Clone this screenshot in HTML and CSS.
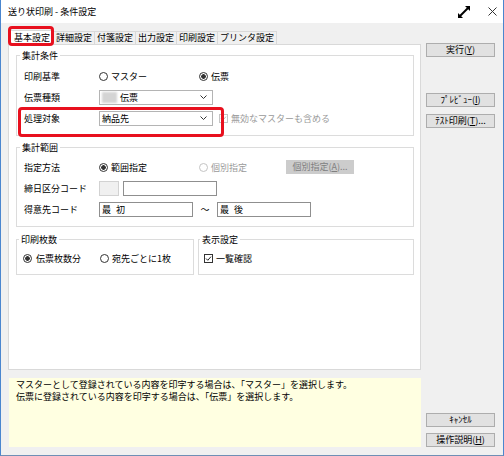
FILE: index.html
```html
<!DOCTYPE html>
<html lang="ja">
<head>
<meta charset="UTF-8">
<title>送り状印刷 - 条件設定</title>
<link rel="stylesheet" href="styles.css">
</head>
<body>

<div class="window">
    <div class="titlebar">
        <span class="title">送り状印刷 - 条件設定</span>
        <span class="title-tools">
            <svg width="16" height="16" viewBox="0 0 16 16">
                <path d="M4 12 L12 4" stroke="#000" stroke-width="2"/>
                <path d="M9 2 H14 V7 Z" fill="#000"/>
                <path d="M2 9 V14 H7 Z" fill="#000"/>
            </svg>
            <svg width="9" height="9" viewBox="0 0 9 9">
                <path d="M0.5 0.5 L8.5 8.5 M8.5 0.5 L0.5 8.5" stroke="#333" stroke-width="1"/>
            </svg>
        </span>
    </div>

    <div class="main">
        <div class="left">
            <div class="tabs">
                <span class="tab active">基本設定</span>
                <span class="tab">詳細設定</span>
                <span class="tab">付箋設定</span>
                <span class="tab">出力設定</span>
                <span class="tab">印刷設定</span>
                <span class="tab">プリンタ設定</span>
            </div>

            <div class="panel">
                <fieldset class="group">
                    <legend>集計条件</legend>
                    <div class="row">
                        <span class="label">印刷基準</span>
                        <span class="opt"><i class="radio"></i>マスター</span>
                        <span class="opt"><i class="radio on"></i>伝票</span>
                    </div>
                    <div class="row">
                        <span class="label">伝票種類</span>
                        <span class="select">
                            <span class="masked"></span>伝票
                            <svg class="chev" width="7" height="4" viewBox="0 0 7 4"><path d="M0.5 0.5 L3.5 3.5 L6.5 0.5" fill="none" stroke="#333"/></svg>
                        </span>
                    </div>
                    <div class="row marked">
                        <span class="label">処理対象</span>
                        <span class="select">
                            納品先
                            <svg class="chev" width="7" height="4" viewBox="0 0 7 4"><path d="M0.5 0.5 L3.5 3.5 L6.5 0.5" fill="none" stroke="#333"/></svg>
                        </span>
                        <span class="opt disabled include">
                            <svg class="check" width="9" height="9" viewBox="0 0 9 9">
                                <rect x="0.5" y="0.5" width="8" height="8" fill="#fff" stroke="#c4c4c4"/>
                                <path d="M2 4.5 L3.8 6.3 L7 2.6" fill="none" stroke="#bdbdbd"/>
                            </svg>無効なマスターも含める
                        </span>
                    </div>
                </fieldset>

                <fieldset class="group range">
                    <legend>集計範囲</legend>
                    <div class="row">
                        <span class="label">指定方法</span>
                        <span class="opt"><i class="radio on"></i>範囲指定</span>
                        <span class="opt disabled narrow"><i class="radio off"></i>個別指定</span>
                        <span class="btn-inline">個別指定(<u>A</u>)...</span>
                    </div>
                    <div class="row">
                        <span class="label">締日区分コード</span>
                        <span class="codebox"></span>
                        <span class="input"></span>
                    </div>
                    <div class="row">
                        <span class="label">得意先コード</span>
                        <span class="input">最 初</span>
                        <span class="tilde">～</span>
                        <span class="input">最 後</span>
                    </div>
                </fieldset>

                <div class="group-pair">
                    <fieldset class="group copies">
                        <legend>印刷枚数</legend>
                        <div class="row">
                            <span class="opt short"><i class="radio on"></i>伝票枚数分</span>
                            <span class="opt"><i class="radio"></i>宛先ごとに1枚</span>
                        </div>
                    </fieldset>
                    <fieldset class="group display">
                        <legend>表示設定</legend>
                        <div class="row">
                            <span class="opt">
                                <svg class="check" width="9" height="9" viewBox="0 0 9 9">
                                    <rect x="0.5" y="0.5" width="8" height="8" fill="#fff" stroke="#333"/>
                                    <path d="M2 4.5 L3.8 6.3 L7 2.6" fill="none" stroke="#222"/>
                                </svg>一覧確認
                            </span>
                        </div>
                    </fieldset>
                </div>
            </div>

            <div class="message">
                マスターとして登録されている内容を印字する場合は、「マスター」を選択します。<br>
                伝票に登録されている内容を印字する場合は、「伝票」を選択します。
            </div>
        </div>

        <div class="side">
            <span class="btn">実行(<u>Y</u>)</span>
            <span class="btn btn-preview">ﾌﾟﾚﾋﾞｭｰ(<u>I</u>)</span>
            <span class="btn btn-test">ﾃｽﾄ印刷(<u>T</u>)...</span>
            <span class="btn btn-cancel">ｷｬﾝｾﾙ</span>
            <span class="btn btn-help">操作説明(<u>H</u>)</span>
        </div>
    </div>
</div>

</body>
</html>
```

FILE: styles.css
```css
* {
    box-sizing: border-box;
}
body {
    margin: 0;
    font-family: "Noto Sans CJK JP", sans-serif;
    font-size: 9px;
    color: #000;
    background-color: #fff;
}
.window {
    width: 504px;
    height: 456px;
    display: flex;
    flex-direction: column;
    background-color: #f0f0f0;
    border-left: 1px solid #4a86cf;
    border-right: 1px solid #4a86cf;
    border-bottom: 1px solid #6f8fb5;
}
.titlebar {
    height: 23px;
    display: flex;
    align-items: center;
    padding: 0 6px 0 7px;
    background-color: #fff;
}
.title {
    line-height: 11px;
}
.title-tools {
    margin-left: auto;
    display: flex;
    align-items: center;
    gap: 16px;
}
.main {
    flex: 1;
    display: flex;
    gap: 5px;
    padding: 0 7px 8px 7px;
}
.left {
    width: 413px;
    display: flex;
    flex-direction: column;
}

/* tab strip */
.tabs {
    height: 14px;
    margin-top: 7px;
    padding-left: 2px;
    display: flex;
    align-items: flex-end;
}
.tab {
    height: 13px;
    padding: 0 2px;
    margin-right: -1px;
    line-height: 12px;
    border: 1px solid #d9d9d9;
    border-bottom: none;
    background-color: #f0f0f0;
}
.tab.active {
    position: relative;
    z-index: 1;
    height: 15px;
    padding: 0 3px;
    margin-bottom: -1px;
    line-height: 14px;
    background-color: #fff;
}
.tab.active::after {
    content: '';
    position: absolute;
    left: -3px;
    right: -1px;
    top: -5px;
    bottom: -1px;
    border: 3px solid #e8101e;
    border-radius: 4px;
}

.panel {
    height: 326px;
    padding: 5px 6px 0 7px;
    border: 1px solid #d9d9d9;
    background-color: #fff;
}
.group {
    margin: 0;
    min-width: 0;
    padding: 7px 6px 9px 7px;
    border: 1px solid #dcdcdc;
}
.group legend {
    margin-left: -4px;
    padding: 0 2px;
    line-height: 11px;
}
.group.range {
    margin-top: 6px;
    padding-top: 6px;
}
.group-pair {
    display: flex;
    gap: 4px;
    margin-top: 7px;
}
.group.copies {
    width: 178px;
    padding: 5px 4px 8px 6px;
}
.group.display {
    flex: 1;
    padding: 5px 4px 8px 5px;
}

.row {
    height: 16px;
    display: flex;
    align-items: center;
}
.row + .row {
    margin-top: 5px;
}
.row.marked {
    position: relative;
}
.row.marked::after {
    content: '';
    position: absolute;
    left: -6px;
    top: -3px;
    width: 200px;
    height: 24px;
    border: 3px solid #e8101e;
    border-radius: 4px;
}
.label {
    width: 75px;
    flex: none;
}
.opt {
    width: 100px;
    display: flex;
    align-items: center;
    gap: 3px;
    flex: none;
}
.opt.narrow {
    width: 87px;
}
.opt.short {
    width: 77px;
    gap: 4px;
}
.opt.include {
    width: auto;
    margin-left: 6px;
}
.disabled {
    color: #9a9a9a;
}

.radio {
    width: 9px;
    height: 9px;
    flex: none;
    border: 1px solid #333;
    border-radius: 50%;
    background-color: #fff;
}
.radio.on {
    background: radial-gradient(circle, #333 0 2px, #fff 2.6px);
}
.radio.off {
    border-color: #c4c4c4;
}
.check {
    flex: none;
}

.select {
    width: 114px;
    height: 15px;
    display: flex;
    align-items: center;
    padding: 0 5px 0 2px;
    border: 1px solid #b4b4b4;
    background-color: #fff;
}
.select .chev {
    margin-left: auto;
}
.masked {
    width: 15px;
    height: 11px;
    margin-right: 3px;
    background-color: #d4d4d4;
    filter: blur(1.2px);
}

.btn-inline {
    width: 68px;
    height: 14px;
    line-height: 14px;
    text-align: center;
    color: #808080;
    background-color: #cccccc;
}
.codebox {
    width: 20px;
    height: 15px;
    margin-right: 4px;
    border: 1px solid #d2d2d2;
    background-color: #f0f0f0;
}
.input {
    width: 94px;
    height: 15px;
    padding-left: 2px;
    line-height: 13px;
    word-spacing: 3px;
    border: 1px solid #8f8f8f;
    background-color: #fff;
}
.tilde {
    width: 24px;
    text-align: center;
}

.message {
    height: 69px;
    margin: 8px 0 0 1px;
    padding: 1px 7px;
    line-height: 12px;
    background-color: #ffffe1;
}

/* command buttons */
.side {
    width: 69px;
    display: flex;
    flex-direction: column;
    padding-top: 20px;
}
.btn {
    height: 14px;
    line-height: 12px;
    text-align: center;
    border: 1px solid #adadad;
    background-color: #e1e1e1;
}
.btn-preview {
    margin-top: 36px;
}
.btn-test {
    margin-top: 7px;
}
.btn-cancel {
    margin-top: auto;
}
.btn-help {
    margin-top: 6px;
}
```
